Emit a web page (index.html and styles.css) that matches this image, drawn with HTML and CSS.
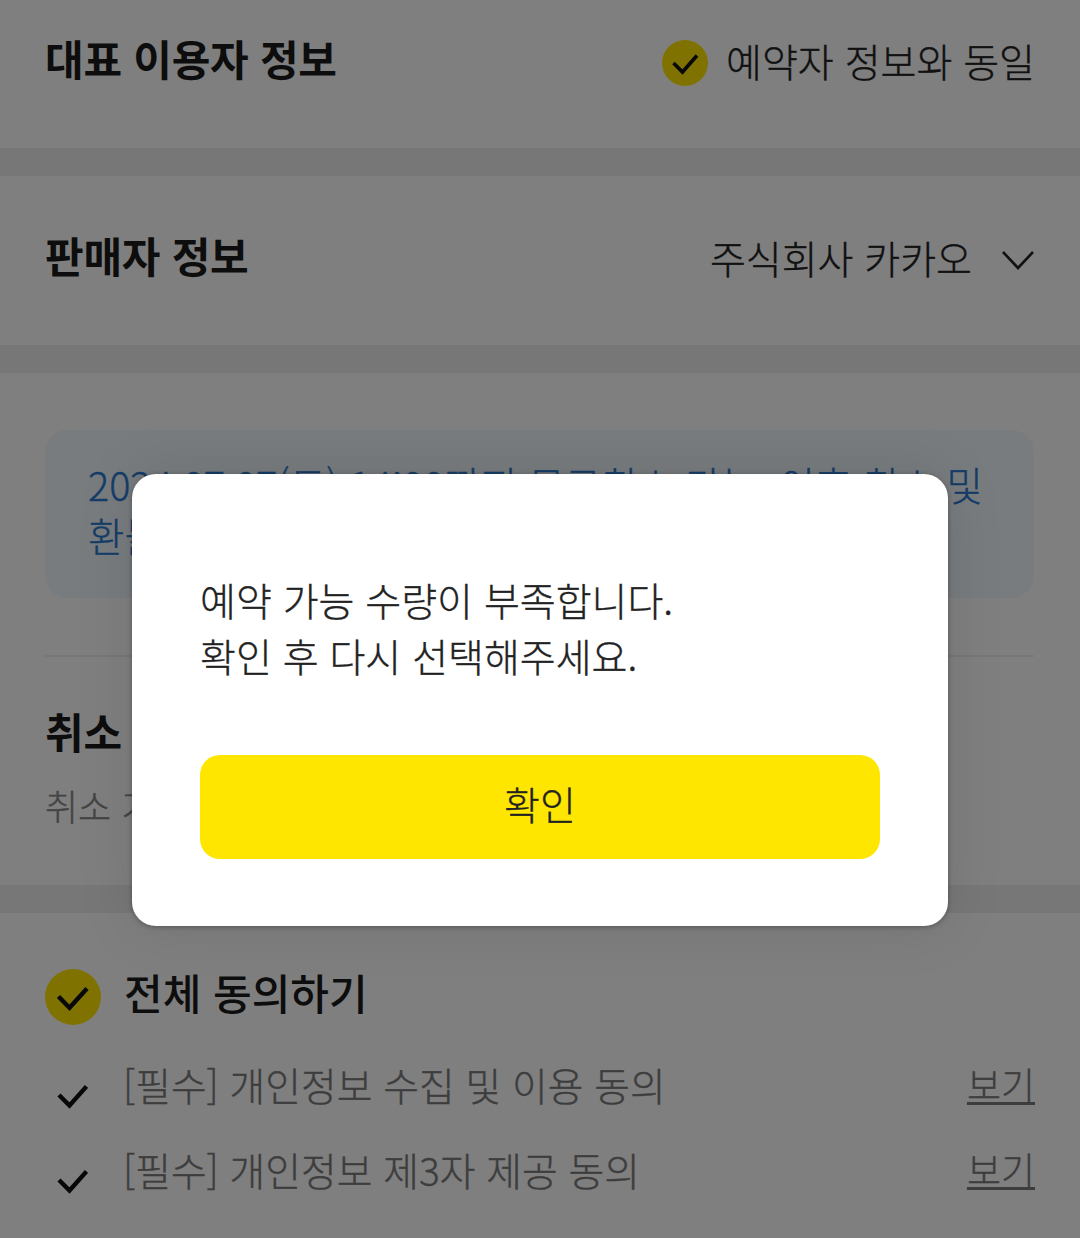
FILE: index.html
```html
<!DOCTYPE html>
<html lang="ko">
<head>
<meta charset="utf-8">
<title>예약</title>
<link rel="stylesheet" href="styles.css">
</head>
<body>
<main class="page">
  <section class="section sec-user">
    <h2 class="title">대표 이용자 정보</h2>
    <div class="right user-right">
      <span class="circle small"><svg viewBox="0 0 46 46" width="46" height="46"><path d="M11.5 23 20.5 32 35 15.5" fill="none" stroke="#111" stroke-width="3.6"/></svg></span>
      <span class="value">예약자 정보와 동일</span>
    </div>
  </section>
  <div class="band"></div>
  <section class="section sec-seller">
    <h2 class="title">판매자 정보</h2>
    <div class="right seller-right">
      <span class="value">주식회사 카카오</span>
      <svg class="chev" viewBox="0 0 34 22" width="34" height="22"><path d="M2 3 17 19 32 3" fill="none" stroke="#222" stroke-width="2.6"/></svg>
    </div>
  </section>
  <div class="band"></div>
  <section class="sec-policy">
    <div class="notice">2024.07.07(토) 14:00까지 무료취소 가능. 이후 취소 및<br>환불 불가</div>
    <div class="divider"></div>
    <h2 class="title cancel-title">취소 규정</h2>
    <p class="cancel-text">취소 기한 안내</p>
  </section>
  <div class="band"></div>
  <section class="sec-agree">
    <div class="agree-all">
      <span class="circle large"><svg viewBox="0 0 56 56" width="56" height="56"><path d="M13.5 27.5 24.5 38.8 42 19.5" fill="none" stroke="#111" stroke-width="4.4"/></svg></span>
      <span class="agree-title">전체 동의하기</span>
    </div>
    <div class="agree-row">
      <svg class="tick" viewBox="0 0 32 26" width="32" height="26"><path d="M3 12 13.5 22.5 30.5 3.5" fill="none" stroke="#111" stroke-width="4.4"/></svg>
      <span class="agree-text">[필수] 개인정보 수집 및 이용 동의</span>
      <a class="view">보기</a>
    </div>
    <div class="agree-row">
      <svg class="tick" viewBox="0 0 32 26" width="32" height="26"><path d="M3 12 13.5 22.5 30.5 3.5" fill="none" stroke="#111" stroke-width="4.4"/></svg>
      <span class="agree-text">[필수] 개인정보 제3자 제공 동의</span>
      <a class="view">보기</a>
    </div>
  </section>
</main>
<div class="overlay"></div>
<div class="modal">
  <p class="message">예약 가능 수량이 부족합니다.<br>확인 후 다시 선택해주세요.</p>
  <button class="confirm">확인</button>
</div>
</body>
</html>
```
FILE: styles.css
```css
* { box-sizing: border-box; }
html, body { margin: 0; padding: 0; }
body {
  width: 1080px;
  height: 1238px;
  overflow: hidden;
  position: relative;
  background: #fff;
  color: #222;
  font-family: "Noto Sans CJK KR", "Noto Sans", sans-serif;
}
.value, .notice, .cancel-text, .agree-text, .view, .message, .confirm {
  font-weight: 300;
  -webkit-text-stroke: 0.35px currentColor;
}
.page { display: flex; flex-direction: column; height: 1238px; overflow: hidden; }
.section { display: flex; justify-content: space-between; padding: 0 45px; }
.sec-user { height: 148px; padding-top: 30px; }
.sec-seller { height: 169px; padding-top: 51px; }
.band { height: 28px; background: #eeeeee; flex: none; }
.title { margin: 0; font-size: 42px; line-height: 56px; font-weight: 700; letter-spacing: -0.25px; color: #1a1a1a; }
.right { display: flex; align-items: center; height: 60px; gap: 18px; }
.user-right { margin-top: 3px; }
.seller-right { margin-top: 3px; gap: 29px; }
.value { margin-bottom: 6px; font-size: 39px; line-height: 56px; color: #222; }
.circle { display: flex; flex: none; border-radius: 50%; background: #fee500; }
.circle.small { width: 46px; height: 46px; }
.circle.large { width: 56px; height: 56px; }
.chev { flex: none; }
.sec-policy { flex: none; height: 512px; padding: 57px 46px 0 45px; }
.notice {
  height: 168px;
  padding: 28px 43px;
  border-radius: 22px;
  background: #f2f8fd;
  color: #2a7ad0;
  font-size: 39.6px;
  line-height: 51px;
  white-space: nowrap;
  overflow: hidden;
}
.divider { height: 2px; margin-top: 57px; background: #f0f0f0; }
.cancel-title { margin-top: 46px; }
.cancel-text { margin: 21px 0 0; font-size: 36px; line-height: 50px; color: #888; }
.sec-agree { flex: 1; padding: 56px 45px 0; }
.agree-all { display: flex; align-items: center; gap: 23px; height: 56px; }
.agree-title { padding-bottom: 10px; font-size: 42px; line-height: 56px; font-weight: 500; color: #1a1a1a; }
.agree-row { display: flex; align-items: center; height: 84.5px; }
.agree-all + .agree-row { margin-top: 17px; }
.tick { flex: none; margin: 24px 36px 0 11px; }
.agree-text { flex: 1; margin-left: -1px; font-size: 38.8px; line-height: 56px; color: #7a7a7a; }
.view { font-size: 37px; line-height: 50px; color: #7a7a7a; text-decoration: underline; }
.overlay { position: absolute; inset: 0; background: rgba(0, 0, 0, 0.5); }
.modal {
  position: absolute;
  left: 132px;
  top: 474px;
  width: 816px;
  height: 452px;
  padding: 97px 68px 0;
  border-radius: 24px;
  background: #fff;
  box-shadow: 0 1px 5px rgba(0, 0, 0, 0.3), 0 0 60px rgba(0, 0, 0, 0.1);
}
.message { margin: 0; font-size: 39px; line-height: 56px; color: #222; }
.confirm {
  display: block;
  width: 680px;
  height: 104px;
  margin-top: 72px;
  padding: 0 0 8px;
  border: 0;
  border-radius: 20px;
  background: #ffe600;
  color: #222;
  font-family: inherit;
  font-size: 39px;
}
```
